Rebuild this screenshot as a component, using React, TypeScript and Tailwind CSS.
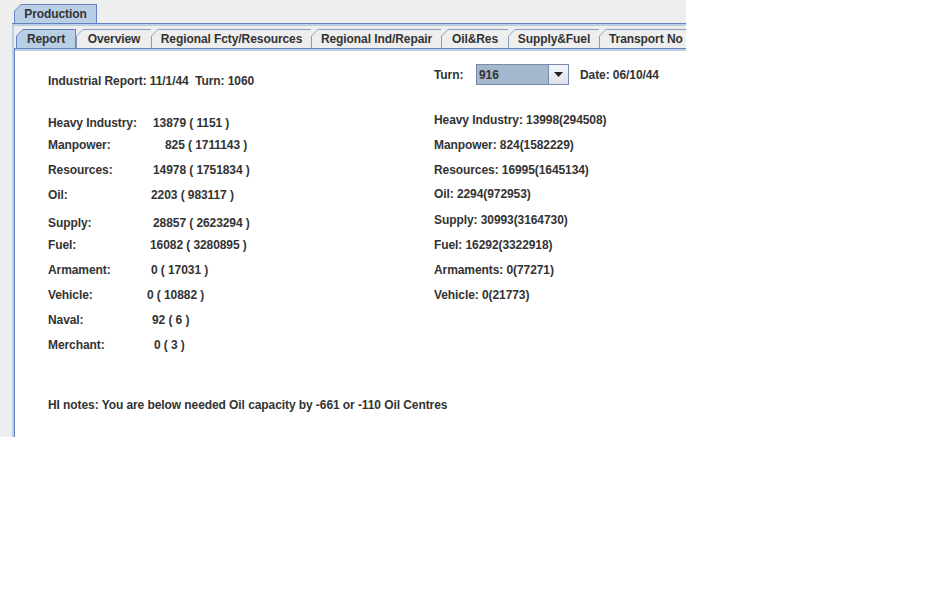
import React from 'react'

const leftRows = [
  { label: 'Heavy Industry:', value: '13879 ( 1151 )', mt: 'mt-[22px]', pl: 'pl-[6px]' },
  { label: 'Manpower:', value: '825 ( 1711143 )', mt: 'mt-[2px]', pl: 'pl-[18px]' },
  { label: 'Resources:', value: '14978 ( 1751834 )', mt: 'mt-[5px]', pl: 'pl-[6px]' },
  { label: 'Oil:', value: '2203 ( 983117 )', mt: 'mt-[5px]', pl: 'pl-[4px]' },
  { label: 'Supply:', value: '28857 ( 2623294 )', mt: 'mt-[8px]', pl: 'pl-[6px]' },
  { label: 'Fuel:', value: '16082 ( 3280895 )', mt: 'mt-[2px]', pl: 'pl-[3px]' },
  { label: 'Armament:', value: '0 ( 17031 )', mt: 'mt-[5px]', pl: 'pl-[4px]' },
  { label: 'Vehicle:', value: '0 ( 10882 )', mt: 'mt-[5px]', pl: 'pl-0' },
  { label: 'Naval:', value: '92 ( 6 )', mt: 'mt-[5px]', pl: 'pl-[5px]' },
  { label: 'Merchant:', value: '0 ( 3 )', mt: 'mt-[5px]', pl: 'pl-[7px]' },
]

const rightRows = [
  { text: 'Heavy Industry: 13998(294508)', mt: 'mt-[25px]' },
  { text: 'Manpower: 824(1582229)', mt: 'mt-[5px]' },
  { text: 'Resources: 16995(1645134)', mt: 'mt-[5px]' },
  { text: 'Oil: 2294(972953)', mt: 'mt-[4px]' },
  { text: 'Supply: 30993(3164730)', mt: 'mt-[6px]' },
  { text: 'Fuel: 16292(3322918)', mt: 'mt-[5px]' },
  { text: 'Armaments: 0(77271)', mt: 'mt-[5px]' },
  { text: 'Vehicle: 0(21773)', mt: 'mt-[5px]' },
]

const tabs = [
  { name: 'Report', w: 'w-[60px]', selected: true },
  { name: 'Overview', w: 'w-[75px]' },
  { name: 'Regional Fcty/Resources', w: 'w-[160px]' },
  { name: 'Regional Ind/Repair', w: 'w-[130px]' },
  { name: 'Oil&Res', w: 'w-[67px]' },
  { name: 'Supply&Fuel', w: 'w-[91px]' },
  { name: 'Transport No', w: 'w-[100px]', left: true },
]

const Tab: React.FC<{ name: string; w: string; selected?: boolean; left?: boolean }> = ({
  name,
  w,
  selected,
  left,
}) => (
  <div
    className={`${w} h-full shrink-0 pl-[1px] pt-[1px] [clip-path:polygon(7px_0,100%_0,100%_100%,0_100%,0_7px)] ${
      selected ? 'bg-[#6382bf] pr-[1px]' : 'bg-[#8c9cbf]'
    }`}
  >
    <div
      className={`h-full flex items-center whitespace-nowrap [clip-path:polygon(6px_0,100%_0,100%_100%,0_100%,0_6px)] ${
        selected ? 'bg-[#b8cfe5]' : 'bg-[#eeeeee]'
      } ${left ? 'justify-start pl-[9px]' : 'justify-center'}`}
    >
      {name}
    </div>
  </div>
)

export default function App() {
  return (
    <div className="w-[948px] h-[607px] bg-white">
      <div className="w-[686px] h-[437px] bg-[#eeeeee] overflow-hidden flex flex-col font-['Liberation_Sans',Arial,sans-serif] font-bold text-[12px] tracking-[-0.08px] text-[#333333]">
        {/* outer tab header */}
        <div className="h-[23px] pl-[14px] pt-[4px] flex shrink-0">
          <div className="w-[83px] h-full pl-[1px] pt-[1px] pr-[1px] bg-[#6382bf] [clip-path:polygon(7px_0,100%_0,100%_100%,0_100%,0_7px)]">
            <div className="h-full flex items-center justify-center bg-[#b8cfe5] [clip-path:polygon(6px_0,100%_0,100%_100%,0_100%,0_6px)]">
              Production
            </div>
          </div>
        </div>

        {/* outer pane */}
        <div className="flex-1 ml-[12px] border-t border-[#6382bf] flex flex-col">
          <div className="flex-1 border-t-2 border-l-2 border-[#b8cfe5] pt-[3px] flex flex-col">
            {/* inner tabs */}
            <div className="h-[19px] pl-[2px] flex shrink-0">
              {tabs.map((t) => (
                <Tab key={t.name} {...t} />
              ))}
            </div>

            {/* inner pane */}
            <div className="flex-1 border-t border-l border-[#6382bf] bg-white flex flex-col">
              <div className="h-[2px] bg-[#b8cfe5] shrink-0" />
              <div className="flex">
                <div className="w-[419px] pl-[33px] flex flex-col">
                  <div className="mt-[20px] h-5 flex items-center whitespace-nowrap">
                    Industrial Report: 11/1/44&nbsp;&nbsp;Turn: 1060
                  </div>
                  {leftRows.map((r) => (
                    <div key={r.label} className={`h-5 flex items-center whitespace-nowrap ${r.mt}`}>
                      <span className="w-[99px] shrink-0">{r.label}</span>
                      <span className={r.pl}>{r.value}</span>
                    </div>
                  ))}
                </div>
                <div className="flex flex-col">
                  <div className="mt-[13px] h-[21px] flex items-center whitespace-nowrap">
                    <span className="w-[42px]">Turn:</span>
                    <div className="w-[93px] h-[21px] flex border border-[#7a8aaa]">
                      <div className="flex-1 bg-[#a3b8cc] flex items-center pl-[2px]">916</div>
                      <div className="w-[20px] border-l border-[#7a8aaa] bg-gradient-to-b from-[#f4f6fa] to-[#dde3ea] flex items-center justify-center">
                        <svg width="9" height="5" viewBox="0 0 9 5">
                          <path d="M0 0H9L4.5 5Z" fill="#222" />
                        </svg>
                      </div>
                    </div>
                    <span className="ml-[11px]">Date: 06/10/44</span>
                  </div>
                  {rightRows.map((r) => (
                    <div key={r.text} className={`h-5 flex items-center whitespace-nowrap ${r.mt}`}>
                      {r.text}
                    </div>
                  ))}
                </div>
              </div>
              <div className="mt-[40px] pl-[33px] h-5 flex items-center whitespace-nowrap">
                HI notes: You are below needed Oil capacity by -661 or -110 Oil Centres
              </div>
            </div>
          </div>
        </div>
      </div>
    </div>
  )
}
